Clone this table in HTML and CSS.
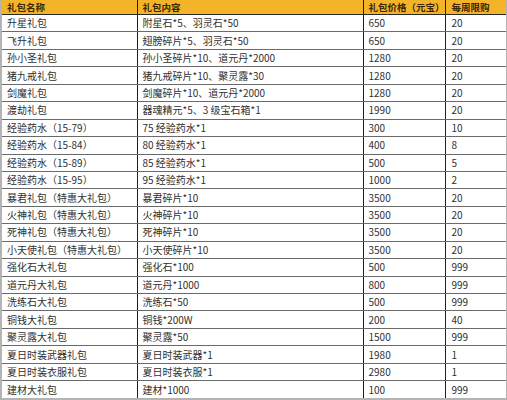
FILE: index.html
```html
<!DOCTYPE html>
<html lang="zh-CN">
<head>
<meta charset="utf-8">
<title>礼包列表</title>
<link rel="stylesheet" href="styles.css">
</head>
<body>
<table class="gift-table">
  <colgroup>
    <col class="c-name">
    <col class="c-content">
    <col class="c-price">
    <col class="c-limit">
  </colgroup>
  <thead>
    <tr><th>礼包名称</th><th>礼包内容</th><th>礼包价格（元宝）</th><th>每周限购</th></tr>
  </thead>
  <tbody>
    <tr><td>升星礼包</td><td>附星石*5、羽灵石*50</td><td>650</td><td>20</td></tr>
    <tr><td>飞升礼包</td><td>翅膀碎片*5、羽灵石*50</td><td>650</td><td>20</td></tr>
    <tr><td>孙小圣礼包</td><td>孙小圣碎片*10、道元丹*2000</td><td>1280</td><td>20</td></tr>
    <tr><td>猪九戒礼包</td><td>猪九戒碎片*10、聚灵露*30</td><td>1280</td><td>20</td></tr>
    <tr><td>剑魔礼包</td><td>剑魔碎片*10、道元丹*2000</td><td>1280</td><td>20</td></tr>
    <tr><td>渡劫礼包</td><td>器魂精元*5、3 级宝石箱*1</td><td>1990</td><td>20</td></tr>
    <tr><td>经验药水（15-79）</td><td>75 经验药水*1</td><td>300</td><td>10</td></tr>
    <tr><td>经验药水（15-84）</td><td>80 经验药水*1</td><td>400</td><td>8</td></tr>
    <tr><td>经验药水（15-89）</td><td>85 经验药水*1</td><td>500</td><td>5</td></tr>
    <tr><td>经验药水（15-95）</td><td>95 经验药水*1</td><td>1000</td><td>2</td></tr>
    <tr><td>暴君礼包（特惠大礼包）</td><td>暴君碎片*10</td><td>3500</td><td>20</td></tr>
    <tr><td>火神礼包（特惠大礼包）</td><td>火神碎片*10</td><td>3500</td><td>20</td></tr>
    <tr><td>死神礼包（特惠大礼包）</td><td>死神碎片*10</td><td>3500</td><td>20</td></tr>
    <tr><td>小天使礼包（特惠大礼包）</td><td>小天使碎片*10</td><td>3500</td><td>20</td></tr>
    <tr><td>强化石大礼包</td><td>强化石*100</td><td>500</td><td>999</td></tr>
    <tr><td>道元丹大礼包</td><td>道元丹*1000</td><td>800</td><td>999</td></tr>
    <tr><td>洗练石大礼包</td><td>洗练石*50</td><td>500</td><td>999</td></tr>
    <tr><td>铜钱大礼包</td><td>铜钱*200W</td><td>200</td><td>40</td></tr>
    <tr><td>聚灵露大礼包</td><td>聚灵露*50</td><td>1500</td><td>999</td></tr>
    <tr><td>夏日时装武器礼包</td><td>夏日时装武器*1</td><td>1980</td><td>1</td></tr>
    <tr><td>夏日时装衣服礼包</td><td>夏日时装衣服*1</td><td>2980</td><td>1</td></tr>
    <tr><td>建材大礼包</td><td>建材*1000</td><td>100</td><td>999</td></tr>
  </tbody>
</table>
</body>
</html>
```

FILE: styles.css
```css
html, body {
  margin: 0;
  padding: 0;
  background: #ffffff;
}

.gift-table {
  width: 506px;
  height: 400px;
  table-layout: fixed;
  border-collapse: collapse;
  border: 2px solid #b4b4b4;
  border-top: none;
  font-family: "Noto Sans CJK SC", "Noto Sans", sans-serif;
  font-size: 10px;
  color: #303030;
}

.c-name { width: 136px; }
.c-content { width: 226px; }
.c-price { width: 82px; }
.c-limit { width: 62px; }

.gift-table th,
.gift-table td {
  padding: 0 2px 0 5px;
  line-height: 14px;
  text-align: left;
  white-space: nowrap;
  overflow: hidden;
  border-top: 1px solid #6a6a6a;
  border-bottom: 1px solid #6a6a6a;
  border-left: 1px solid #1e1e1e;
  border-right: 1px solid #1e1e1e;
}

.gift-table th {
  background: #f4b42a;
  color: #3b2608;
  font-size: 9.5px;
  font-weight: bold;
  border-top: none;
  border-bottom: 1px solid #2a2a2a;
}

.gift-table th:first-child,
.gift-table td:first-child {
  border-left: 2px solid #b4b4b4;
}

.gift-table th:last-child,
.gift-table td:last-child {
  border-right: 2px solid #b4b4b4;
  padding-left: 6px;
}

.gift-table tbody tr:last-child td {
  border-bottom: 2px solid #b4b4b4;
}
```
